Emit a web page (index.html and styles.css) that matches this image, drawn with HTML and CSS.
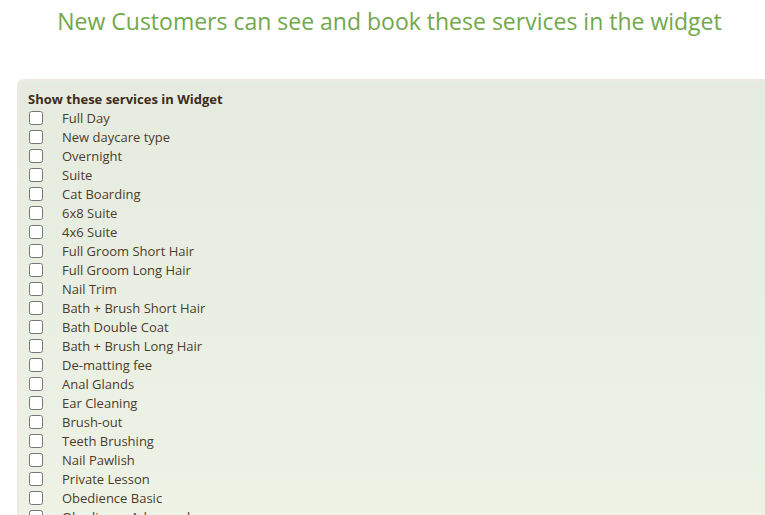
FILE: index.html
```html
<!DOCTYPE html>
<html>
	<head>
		<title>Widget services</title>
		<meta charset="UTF-8">
		<link rel="stylesheet" href="styles.css">
	</head>
	<body>
		<div class="page">
			<h2 class="title">New Customers can see and book these services in the widget</h2>
			<div class="panel">
				<h4>Show these services in Widget</h4>
				<ul class="services">
					<li><input type="checkbox"><span>Full Day</span></li>
					<li><input type="checkbox"><span>New daycare type</span></li>
					<li><input type="checkbox"><span>Overnight</span></li>
					<li><input type="checkbox"><span>Suite</span></li>
					<li><input type="checkbox"><span>Cat Boarding</span></li>
					<li><input type="checkbox"><span>6x8 Suite</span></li>
					<li><input type="checkbox"><span>4x6 Suite</span></li>
					<li><input type="checkbox"><span>Full Groom Short Hair</span></li>
					<li><input type="checkbox"><span>Full Groom Long Hair</span></li>
					<li><input type="checkbox"><span>Nail Trim</span></li>
					<li><input type="checkbox"><span>Bath + Brush Short Hair</span></li>
					<li><input type="checkbox"><span>Bath Double Coat</span></li>
					<li><input type="checkbox"><span>Bath + Brush Long Hair</span></li>
					<li><input type="checkbox"><span>De-matting fee</span></li>
					<li><input type="checkbox"><span>Anal Glands</span></li>
					<li><input type="checkbox"><span>Ear Cleaning</span></li>
					<li><input type="checkbox"><span>Brush-out</span></li>
					<li><input type="checkbox"><span>Teeth Brushing</span></li>
					<li><input type="checkbox"><span>Nail Pawlish</span></li>
					<li><input type="checkbox"><span>Private Lesson</span></li>
					<li><input type="checkbox"><span>Obedience Basic</span></li>
					<li><input type="checkbox"><span>Obedience Advanced</span></li>
				</ul>
			</div>
		</div>
	</body>
</html>
```

FILE: styles.css
```css
body{
	margin: 0;
	font-family: "Open Sans", sans-serif;
	background-color: white;
	overflow: hidden;
}
.page{
	padding-left: 17px;
	width: 745px;
}
.title{
	margin: 0;
	padding-top: 5px;
	height: 79px;
	box-sizing: border-box;
	text-align: center;
	font-weight: normal;
	font-size: 23px;
	color: #72a84c;
}
.panel{
	width: 760px;
	min-height: 460px;
	border-top: 2px solid #f0e9e2;
	border-left: 2px solid #f0e9e2;
	border-radius: 6px 0 0 0;
	padding: 9px 9px;
	background: linear-gradient(#e6ebe0, #eef3e6);
}
.panel h4{
	margin: 0;
	font-size: 13px;
	line-height: 18px;
	color: #3e2b1b;
}
.services{
	list-style: none;
	margin: 0;
	padding: 0;
}
.services li{
	display: flex;
	align-items: center;
	height: 19px;
	font-size: 13px;
	color: #4d3c2b;
}
.services input{
	width: 14px;
	height: 14px;
	margin: 0 19px 0 1px;
}
```
